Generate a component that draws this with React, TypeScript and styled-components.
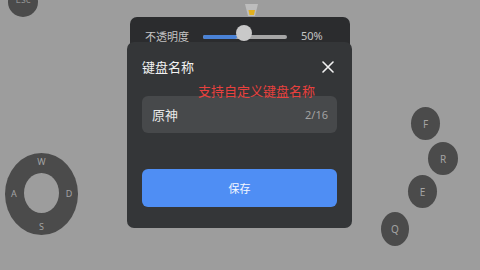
import React from "react";
import styled, { createGlobalStyle } from "styled-components";

const Global = createGlobalStyle`
  html, body { margin: 0; padding: 0; background: #9d9d9d; }
  body { font-family: "Noto Sans CJK SC", "Noto Sans", sans-serif; }
`;

const Stage = styled.div`
  position: relative;
  width: 480px;
  height: 270px;
  overflow: hidden;
  background: #9d9d9d;
`;

const Key = styled.div<{ $x: number; $y: number; $w: number; $h: number }>`
  position: absolute;
  left: ${(p) => p.$x}px;
  top: ${(p) => p.$y}px;
  width: ${(p) => p.$w}px;
  height: ${(p) => p.$h}px;
  border-radius: 50%;
  background: #4b4b4b;
  color: #a3a3a3;
  font-family: "Noto Sans", sans-serif;
  font-size: 10px;
  display: flex;
  align-items: center;
  justify-content: center;
`;

const EscKey = styled(Key)`
  align-items: flex-end;
  padding-bottom: 12px;
  box-sizing: border-box;
  font-size: 10px;
  line-height: 12px;
  color: #8f8f8f;
`;

const Joystick = styled.div`
  position: absolute;
  left: 5px;
  top: 153px;
  width: 73px;
  height: 82px;
  border-radius: 50%;
  background: #4b4b4b;
  display: grid;
  grid-template-columns: 18px 1fr 18px;
  grid-template-rows: 16px 1fr 18px;
  align-items: center;
  justify-items: center;
  color: #a3a3a3;
  font-family: "Noto Sans", sans-serif;
  font-size: 9px;
`;

const Hole = styled.div`
  grid-column: 2;
  grid-row: 2;
  width: 35px;
  height: 40px;
  border-radius: 50%;
  background: #9d9d9d;
`;

const Dir = styled.span<{ $col: number; $row: number }>`
  grid-column: ${(p) => p.$col};
  grid-row: ${(p) => p.$row};
`;

const CupIcon = styled.svg`
  position: absolute;
  left: 244px;
  top: 2px;
`;

const OpacityPanel = styled.div`
  position: absolute;
  left: 130px;
  top: 17px;
  width: 220px;
  height: 60px;
  border-radius: 7px;
  background: #2b2c2e;
  display: flex;
  align-items: flex-start;
  padding: 11px 28px 0 15px;
  box-sizing: border-box;
  gap: 14px;
  color: #c4c4c4;
  font-size: 11px;
`;

const PanelLabel = styled.span`
  line-height: 16px;
  white-space: nowrap;
  flex-shrink: 0;
`;

const Slider = styled.div`
  position: relative;
  flex-shrink: 0;
  width: 84px;
  height: 4px;
  margin-top: 7px;
  background: #a6a6a6;
  border-radius: 2px;
`;

const SliderFill = styled.div`
  height: 100%;
  background: #4a82d6;
  border-radius: 2px;
`;

const Knob = styled.div`
  position: absolute;
  top: -10px;
  width: 16px;
  height: 16px;
  border-radius: 50%;
  background: #c9c9c9;
  transform: translateX(-50%);
`;

const Percent = styled.span`
  margin-left: auto;
  line-height: 16px;
  white-space: nowrap;
  font-family: "Noto Sans", sans-serif;
`;

const Dialog = styled.div`
  position: absolute;
  left: 127px;
  top: 42px;
  width: 225px;
  height: 186px;
  border-radius: 7px;
  background: #343638;
  box-sizing: border-box;
  padding: 16px 15px 21px;
  display: flex;
  flex-direction: column;
`;

const Header = styled.div`
  display: flex;
  align-items: center;
  justify-content: space-between;
  height: 18px;
`;

const Title = styled.span`
  color: #f2f2f2;
  font-size: 13px;
  line-height: 18px;
`;

const Close = styled.svg`
  margin-right: 3px;
`;

const Hint = styled.span`
  position: absolute;
  left: 71px;
  top: 40px;
  color: #e8413e;
  font-size: 13px;
  line-height: 18px;
  white-space: nowrap;
`;

const Field = styled.div`
  margin-top: 20px;
  height: 37px;
  border-radius: 6px;
  background: #47494b;
  display: flex;
  align-items: center;
  justify-content: space-between;
  padding: 0 9px 0 10px;
`;

const FieldValue = styled.span`
  color: #e8e8e8;
  font-size: 13px;
`;

const Counter = styled.span`
  color: #a2a2a2;
  font-size: 11px;
  font-family: "Noto Sans", sans-serif;
`;

const SaveButton = styled.button`
  margin-top: 36px;
  height: 38px;
  border: none;
  border-radius: 6px;
  background: #4f8ef4;
  color: #f4f8ff;
  font-family: "Noto Sans CJK SC", sans-serif;
  font-size: 11px;
  padding: 0;
`;

const keys = [
  { l: "F", x: 411, y: 107, w: 29, h: 33 },
  { l: "R", x: 428, y: 142, w: 30, h: 33 },
  { l: "E", x: 408, y: 175, w: 29, h: 33 },
  { l: "Q", x: 381, y: 212, w: 28, h: 34 },
];

export default function App() {
  const value = 0.5;
  return (
    <Stage>
      <Global />
      <EscKey $x={8} $y={-13} $w={30} $h={30}>Esc</EscKey>
      <Joystick>
        <Dir $col={2} $row={1}>W</Dir>
        <Dir $col={1} $row={2}>A</Dir>
        <Hole />
        <Dir $col={3} $row={2}>D</Dir>
        <Dir $col={2} $row={3}>S</Dir>
      </Joystick>
      {keys.map((k) => (
        <Key key={k.l} $x={k.x} $y={k.y} $w={k.w} $h={k.h}>{k.l}</Key>
      ))}
      <CupIcon width="16" height="16" viewBox="0 0 16 16">
        <path d="M1 2 L14 2 L11 14 L4 14 Z" fill="#bdbdbd" />
        <path d="M4.5 8 L11 8 L10 13 L5.5 13 Z" fill="#e2b01e" />
      </CupIcon>
      <OpacityPanel>
        <PanelLabel>不透明度</PanelLabel>
        <Slider>
          <SliderFill style={{ width: `${value * 84 - 8}px` }} />
          <Knob style={{ left: `${value * 84 - 1}px` }} />
        </Slider>
        <Percent>50%</Percent>
      </OpacityPanel>
      <Dialog>
        <Header>
          <Title>键盘名称</Title>
          <Close width="12" height="12" viewBox="0 0 12 12">
            <path d="M1 1 L11 11 M11 1 L1 11" stroke="#f2f2f2" strokeWidth="1.6" strokeLinecap="round" />
          </Close>
        </Header>
        <Hint>支持自定义键盘名称</Hint>
        <Field>
          <FieldValue>原神</FieldValue>
          <Counter>2/16</Counter>
        </Field>
        <SaveButton>保存</SaveButton>
      </Dialog>
    </Stage>
  );
}
